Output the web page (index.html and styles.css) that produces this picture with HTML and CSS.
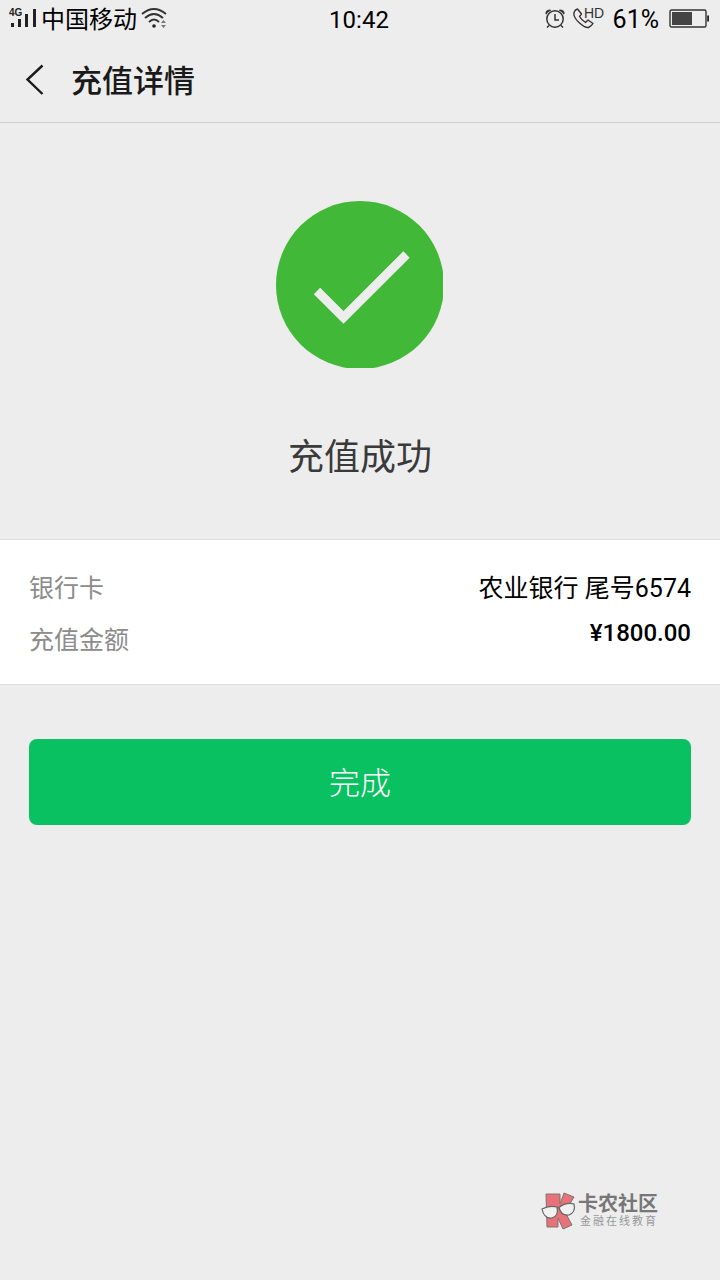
FILE: index.html
```html
<!DOCTYPE html>
<html lang="zh-CN">
<head>
<meta charset="utf-8">
<meta name="viewport" content="width=device-width, initial-scale=1">
<title>充值详情</title>
<link rel="stylesheet" href="styles.css">
</head>
<body>
<div class="status">
  <div class="status-side">
    <svg class="signal" width="28" height="22" viewBox="0 0 28 22" role="img" aria-label="4G">
      <text class="signal-label" x="0" y="8">4G</text>
      <path fill="#222" d="M2 15h3v4H2zM9 11h3v8H9zM16 6h3v13h-3zM24 1h3v18h-3z"/>
    </svg>
    <span class="carrier">中国移动</span>
    <svg class="wifi" width="26" height="22" viewBox="0 0 26 22" aria-hidden="true">
      <g fill="none" stroke="#333" stroke-width="2">
        <path d="M1 6Q13 -4 25 6M4 10Q13 2 22 10M8 14Q13 9 18 14"/>
      </g>
      <circle cx="13" cy="18" r="1.800" fill="#222"/>
      <path fill="#777" d="M20 15l2.500-3 2.500 3zM20 17l2.500 3 2.500-3z"/>
    </svg>
  </div>
  <time class="clock">10:42</time>
  <div class="status-side status-end">
    <svg width="20" height="22" viewBox="0 0 20 22" aria-hidden="true">
      <g fill="none" stroke="#333" stroke-width="1.500">
        <circle cx="10" cy="11" r="8.200"/>
        <path d="M10 6v6h4M4 17.500l-2 2M16 17.500l2 2"/>
      </g>
      <path fill="#333" d="M.5 6Q0 1.500 5.500 1.500L6 2.500Q2.500 4 1.500 6.500zM19.500 6Q20 1.500 14.500 1.500L14 2.500Q17.500 4 18.500 6.500z"/>
    </svg>
    <svg class="call" width="30" height="22" viewBox="0 0 30 22" aria-hidden="true">
      <path fill="none" stroke="#333" stroke-width="1.400" stroke-linejoin="round" d="M4.500 1Q2 1.500 1 4.500Q0 9 6 14.500T15.500 19.500Q18.500 18 20 15.500L15 12 12.500 14.500Q8.500 12 6.500 8.500L8.500 6z"/>
      <text class="call-label" x="11" y="10">HD</text>
    </svg>
    <span class="percent">61%</span>
    <svg width="40" height="20" viewBox="0 0 40 20" aria-hidden="true">
      <rect x="1" y="1" width="36" height="17" rx="1.500" fill="none" stroke="#333" stroke-width="1.400"/>
      <path fill="#444" d="M3 3h20v13H3z"/>
      <path fill="#222" d="M38.200 6.500H40v6h-1.800z"/>
    </svg>
  </div>
</div>
<header class="header">
  <button class="back" type="button" aria-label="返回">
    <svg width="18" height="32" viewBox="0 0 18 32" aria-hidden="true"><path fill="none" stroke="#1a1a1a" stroke-width="2.400" d="M16.500 1.500L1.500 15.500 16.500 30"/></svg>
  </button>
  <h1 class="title">充值详情</h1>
</header>
<main>
  <section class="result">
    <svg width="168" height="168" viewBox="0 0 168 168" aria-hidden="true">
      <clipPath id="disc"><path d="M0 0h167v167H0z"/></clipPath>
      <circle cx="84" cy="84" r="84" fill="#41b837" clip-path="url(#disc)"/>
      <path fill="none" stroke="#ededed" stroke-width="9" stroke-linejoin="miter" d="M41 90L67.500 116.500 130.500 53.500"/>
    </svg>
    <h2 class="message">充值成功</h2>
  </section>
  <dl class="details">
    <div class="row"><dt>银行卡</dt><dd>农业银行 尾号6574</dd></div>
    <div class="row"><dt>充值金额</dt><dd class="amount">¥1800.00</dd></div>
  </dl>
  <div class="actions"><button class="done" type="button">完成</button></div>
</main>
<aside class="brand">
  <svg width="35" height="38" viewBox="0 0 35 38" aria-hidden="true">
    <path fill="#e8717a" stroke="#777" stroke-width="1" stroke-linejoin="round" d="M5 2h14v10L23 1l10 4-9 15 7 13-9 4-5-11v9H6z"/>
    <path fill="#f1f1f1" stroke="#666" stroke-width="1.200" d="M1 17Q8 13 16 15Q18 24 11 26Q3 27 1 17zM18 15.500Q25 10 33 12Q35 20 28 23Q20 24 18 15.500zM16 16.500q1-1 2-1"/>
  </svg>
  <div>
    <div class="brand-name">卡农社区</div>
    <div class="brand-tag">金融在线教育</div>
  </div>
</aside>
</body>
</html>
```
FILE: styles.css
```css
* { box-sizing: border-box; }
body {
  position: relative;
  min-height: 100vh;
  margin: 0;
  background: #ededed;
  color: #000;
  font-family: Roboto, "Noto Sans CJK SC", sans-serif;
}
svg { display: block; flex: none; overflow: visible; }
button { border: 0; font-family: inherit; cursor: pointer; }
.status {
  display: grid;
  grid-template-columns: 1fr auto 1fr;
  align-items: center;
  height: 38px;
  padding: 0 11px 0 9px;
  font-size: 24px;
  line-height: 36px;
}
.status-side { display: flex; align-items: center; }
.status-end { justify-content: flex-end; gap: 8px; }
.signal-label { font: bold 10px "Liberation Sans", sans-serif; fill: #222; }
.carrier { margin: 0 4px; padding-top: 2px; }
.clock { padding-top: 2px; }
.call-label { font: 14px "Liberation Sans", sans-serif; fill: #333; }
.percent { margin: 0 2px; padding-top: 2px; font-size: 25px; }
.header {
  display: flex;
  align-items: center;
  gap: 27px;
  height: 85px;
  padding: 0 26px;
  border-bottom: 1px solid #d0d0d0;
}
.back { padding: 0; background: none; }
.title { margin: 0; padding-top: 4px; font-size: 31px; line-height: 44px; font-weight: 500; color: #1a1a1a; }
.result {
  display: flex;
  flex-direction: column;
  align-items: center;
  padding: 78px 28px 54px;
}
.message { margin: 62px 0 0; font-size: 36px; line-height: 54px; font-weight: 400; color: #3a3a3a; }
.details {
  margin: 0;
  padding: 29px 29px 23px;
  border: solid #dedede;
  border-width: 1px 0;
  background: #fff;
  font-size: 25px;
  line-height: 40px;
}
.row { display: flex; justify-content: space-between; align-items: flex-end; }
.row + .row { align-items: flex-start; }
.row + .row dt { padding-top: 12px; }
dt { color: #8c8c8c; }
dd { margin: 0; }
.amount { padding-top: 4px; font-size: 24px; font-weight: 500; }
.actions { padding: 54px 29px; }
.done {
  width: 100%;
  padding: 22px 20px 18px;
  border-radius: 8px;
  background: #09c160;
  color: #fff;
  font-size: 31px;
  font-weight: 300;
  line-height: 46px;
}
.brand {
  position: absolute;
  right: 62px;
  bottom: 50px;
  display: flex;
  align-items: center;
  gap: 2px;
  color: #777;
}
.brand-name { font-size: 20px; line-height: 22px; font-weight: 700; }
.brand-tag { padding-left: 2px; font-size: 11px; line-height: 14px; letter-spacing: 2px; color: #999; }
```
